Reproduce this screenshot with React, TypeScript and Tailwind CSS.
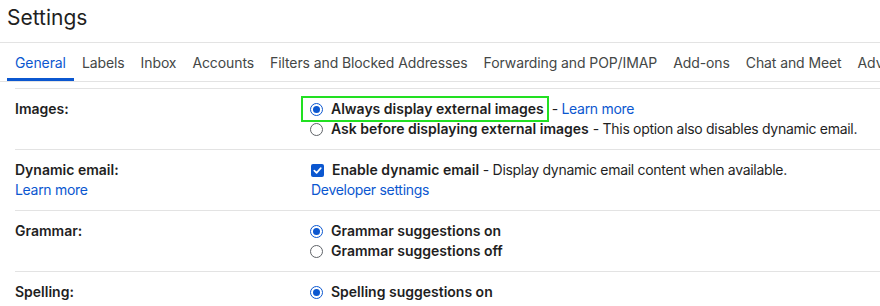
import React from 'react';

const tabs = [
  'General',
  'Labels',
  'Inbox',
  'Accounts',
  'Filters and Blocked Addresses',
  'Forwarding and POP/IMAP',
  'Add-ons',
  'Chat and Meet',
  'Advanced',
];

const Radio = ({ checked }: { checked?: boolean }) =>
  checked ? (
    <span className="flex h-[13px] w-[13px] shrink-0 items-center justify-center rounded-full border-[1.5px] border-[#0b57d0] bg-white">
      <span className="h-[7px] w-[7px] rounded-full bg-[#0b57d0]" />
    </span>
  ) : (
    <span className="h-[13px] w-[13px] shrink-0 rounded-full border border-[#5f6368] bg-white" />
  );

const Checkbox = () => (
  <span className="flex h-[13px] w-[13px] shrink-0 items-center justify-center rounded-[2px] bg-[#0b57d0]">
    <svg viewBox="0 0 12 12" className="h-[11px] w-[11px]" fill="none">
      <path d="M2.5 6.2 5 8.6 9.6 3.4" stroke="white" strokeWidth="1.8" strokeLinecap="round" strokeLinejoin="round" />
    </svg>
  </span>
);

const Option = ({
  checked,
  label,
  note,
  highlight,
}: {
  checked?: boolean;
  label: string;
  note?: React.ReactNode;
  highlight?: boolean;
}) => (
  <div className="flex items-center leading-5">
    <span
      className={
        highlight
          ? '-my-[3px] -ml-[9px] flex items-center gap-[8px] border-2 border-[#22e022] py-[1px] pl-[7px] pr-[3px]'
          : 'flex items-center gap-[8px]'
      }
    >
      <Radio checked={checked} />
      <span className="font-semibold tracking-normal text-[#1f1f1f]">{label}</span>
    </span>
    {note}
  </div>
);

const Row = ({ label, sub, children }: { label: string; sub?: string; children: React.ReactNode }) => (
  <div className="flex border-t border-[#e3e3e3] py-2.5 leading-5">
    <div className="w-[295px] shrink-0">
      <div className="font-semibold text-[#1f1f1f]">{label}</div>
      {sub && <div className="tracking-[-0.3px] text-[#0b57d0]">{sub}</div>}
    </div>
    <div className="flex flex-col">{children}</div>
  </div>
);

export default function App() {
  return (
    <div className="h-[306px] w-[880px] overflow-hidden whitespace-nowrap bg-white font-['Inter',sans-serif] text-[14px] text-[#1f1f1f]">
      <div className="h-[42px] px-[7px] pt-1 text-[21px] leading-7 text-[#1f1f1f]">Settings</div>

      <div className="flex border-y border-[#e3e3e3] px-[7px] tracking-[-0.1px]">
        {tabs.map((t, i) => (
          <div
            key={t}
            className={
              i === 0
                ? 'flex h-[38px] shrink-0 items-center border-b-[3px] border-[#0b57d0] px-2 pt-[4px] text-[#0b57d0]'
                : 'flex h-[38px] shrink-0 items-center px-2 pt-[1px] text-[#444746]'
            }
          >
            {t}
          </div>
        ))}
      </div>

      <div className="ml-[15px] mt-[6px]">
        <Row label="Images:">
          <Option
            checked
            highlight
            label="Always display external images"
            note={
              <span className="ml-[3px] tracking-[-0.3px]">
                - <span className="text-[#0b57d0]">Learn more</span>
              </span>
            }
          />
          <Option
            label="Ask before displaying external images"
            note={<span className="ml-[4px] tracking-[-0.3px]">- This option also disables dynamic email.</span>}
          />
        </Row>

        <Row label="Dynamic email:" sub="Learn more">
          <div className="flex items-center gap-[8px] pl-[1px]">
            <Checkbox />
            <span className="tracking-[-0.3px]">
              <span className="font-semibold tracking-normal">Enable dynamic email</span> - Display dynamic email
              content when available.
            </span>
          </div>
          <div className="pl-[1px] tracking-[-0.3px] text-[#0b57d0]">Developer settings</div>
        </Row>

        <Row label="Grammar:">
          <Option checked label="Grammar suggestions on" />
          <Option label="Grammar suggestions off" />
        </Row>

        <Row label="Spelling:">
          <Option checked label="Spelling suggestions on" />
        </Row>
      </div>
    </div>
  );
}
